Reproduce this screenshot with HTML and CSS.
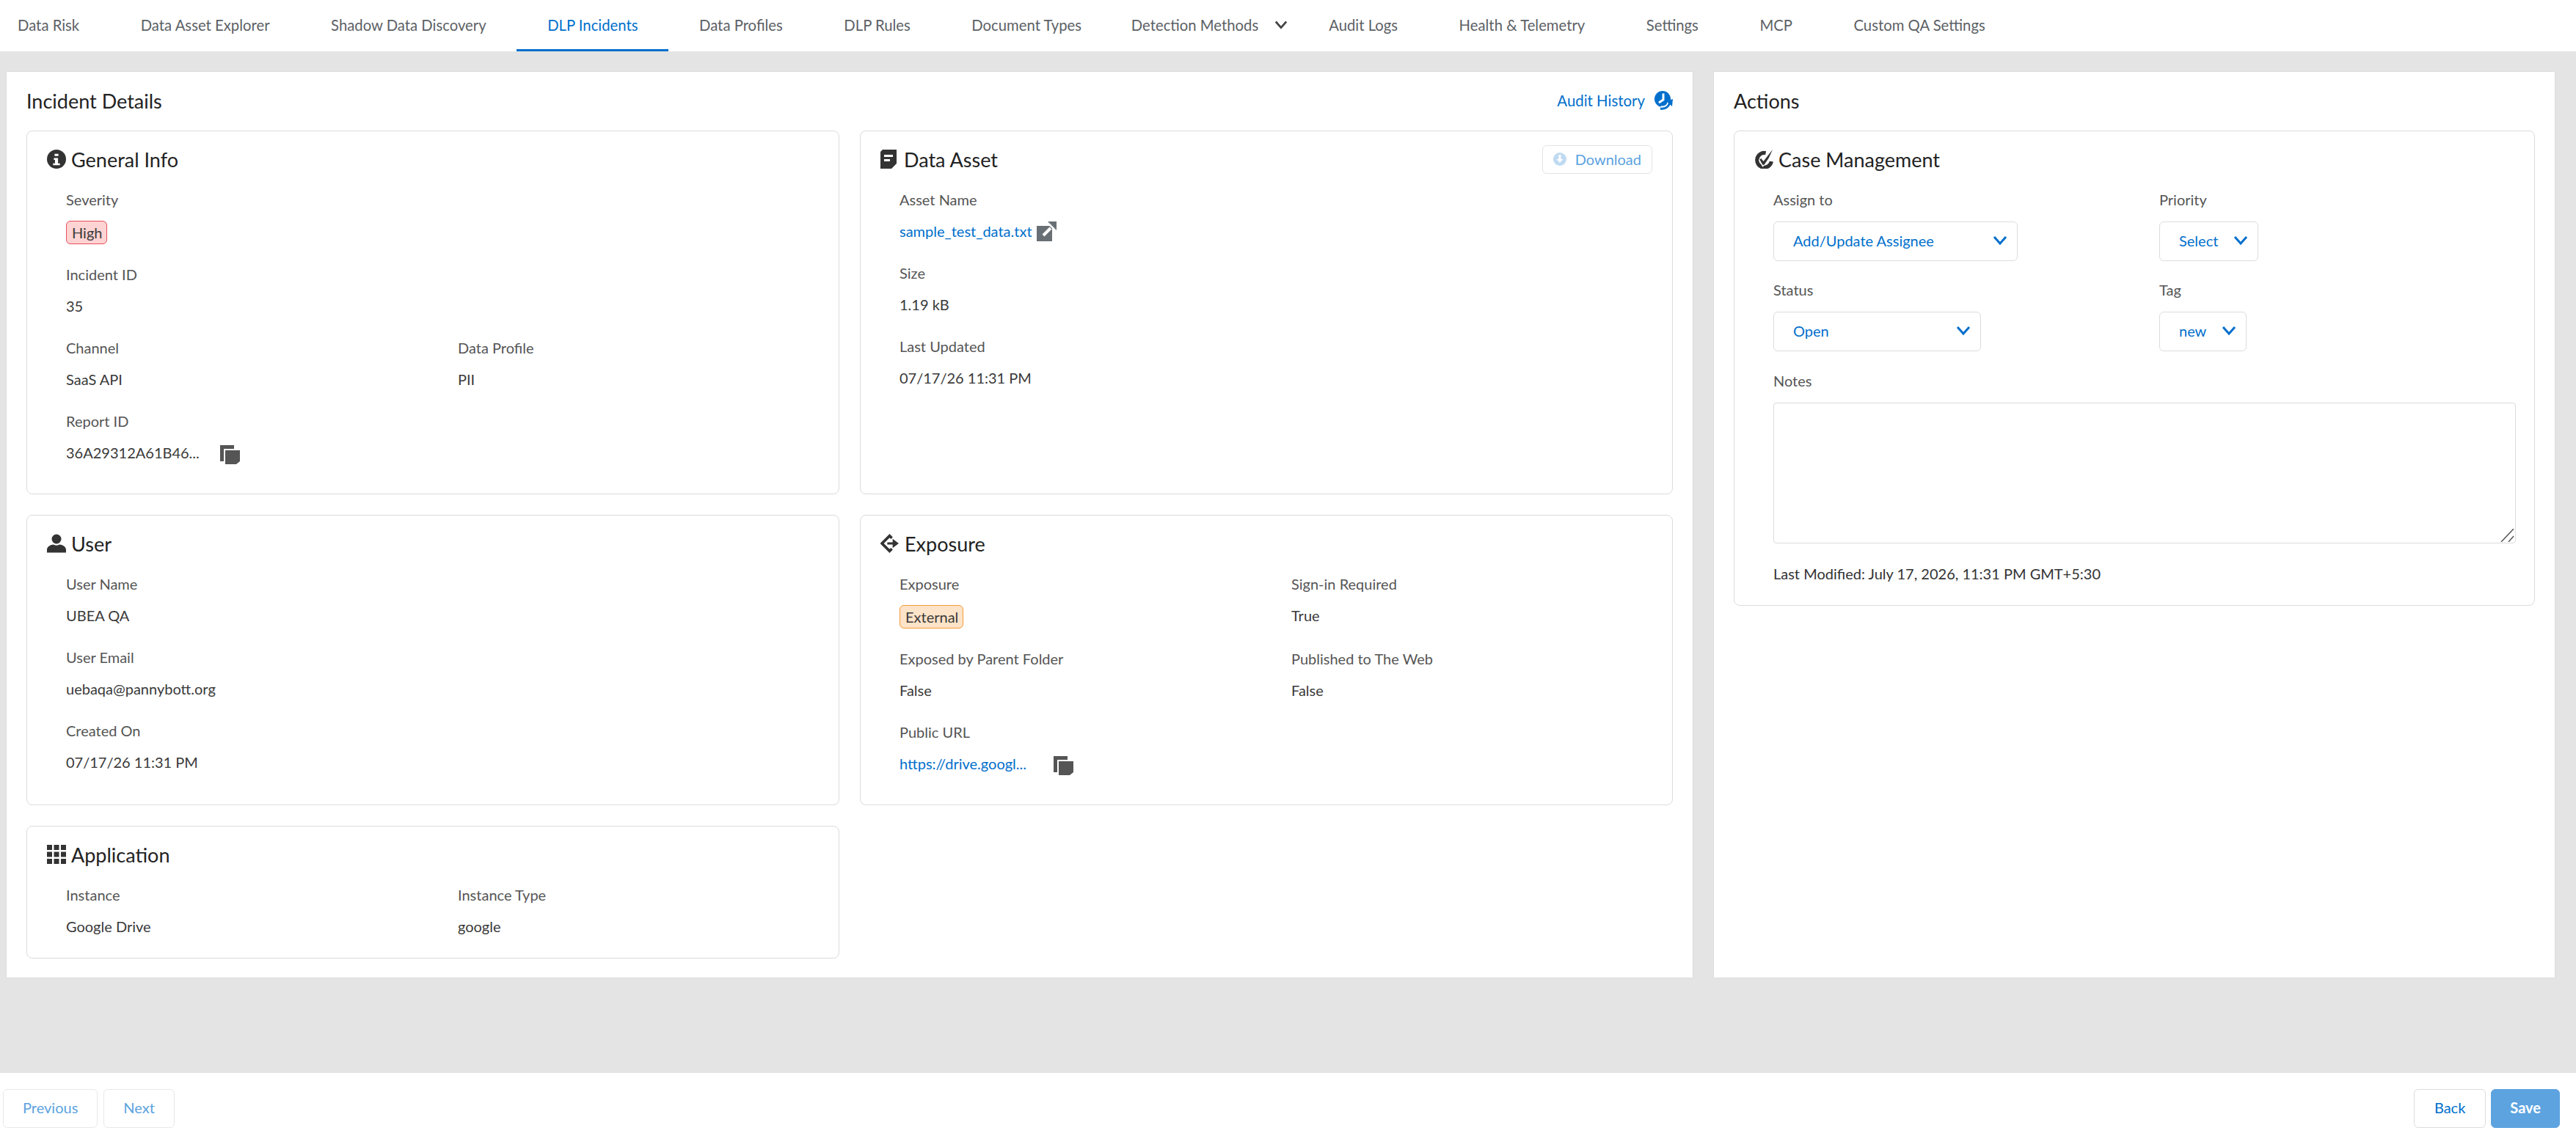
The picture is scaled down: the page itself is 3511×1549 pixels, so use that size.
FILE: index.html
```html
<!DOCTYPE html>
<html>
<head>
  <link rel="stylesheet" href="styles.css">
</head>
<body>
  <svg class="icon-defs" width="0" height="0">
    <symbol id="chevron" viewBox="0 0 20 14">
      <path d="M2 2l8 9 8-9" fill="none" stroke="currentColor" stroke-width="3"/>
    </symbol>
    <symbol id="copy" viewBox="0 0 27 26">
      <path d="M0 0h19v5H5v17H0z"/>
      <path d="M7 7h20v15l-5 4H7z"/>
    </symbol>
  </svg>

  <div class="page">
    <div class="tabs">
      <a class="tab">Data Risk</a>
      <a class="tab">Data Asset Explorer</a>
      <a class="tab">Shadow Data Discovery</a>
      <a class="tab active">DLP Incidents</a>
      <a class="tab">Data Profiles</a>
      <a class="tab">DLP Rules</a>
      <a class="tab">Document Types</a>
      <a class="tab tab-more">Detection Methods <svg class="tab-chevron"><use href="#chevron"/></svg></a>
      <a class="tab">Audit Logs</a>
      <a class="tab">Health &amp; Telemetry</a>
      <a class="tab">Settings</a>
      <a class="tab">MCP</a>
      <a class="tab">Custom QA Settings</a>
    </div>

    <div class="main">
      <div class="panel">
        <div class="panel-header">
          <h2>Incident Details</h2>
          <a class="audit-link">Audit History
            <svg class="audit-icon" viewBox="0 0 25 26">
              <circle cx="11" cy="11" r="11" fill="#006fcc"/>
              <path d="M12 3.500V12l-6 4" fill="none" stroke="#fff" stroke-width="3"/>
              <path d="M8 23c6 2 11-1 13-8" fill="none" stroke="#fff" stroke-width="6"/>
              <path d="M8 24c6 1 11-2 13-8" fill="none" stroke="#006fcc" stroke-width="3"/>
              <path d="M16 14l9-3-1 10z" fill="#006fcc"/>
            </svg>
          </a>
        </div>

        <div class="card-grid">
          <div class="card">
            <div class="card-title">
              <svg class="title-icon" viewBox="0 0 25 25">
                <circle cx="12.500" cy="12.500" r="12.500" fill="#333"/>
                <path d="M10 5.500h5v3h-5zM9 11h5.500v7H17v2.500H8V18h2.500v-4.500H9z" fill="#fff"/>
              </svg>
              General Info
            </div>
            <div class="fields">
              <div class="field full">
                <div class="label">Severity</div>
                <div class="value"><span class="pill pill-high">High</span></div>
              </div>
              <div class="field full">
                <div class="label">Incident ID</div>
                <div class="value">35</div>
              </div>
              <div class="field">
                <div class="label">Channel</div>
                <div class="value">SaaS API</div>
              </div>
              <div class="field">
                <div class="label">Data Profile</div>
                <div class="value">PII</div>
              </div>
              <div class="field full last">
                <div class="label">Report ID</div>
                <div class="value value-copy"><span class="short-text">36A29312A61B46...</span><svg class="copy-icon"><use href="#copy"/></svg></div>
              </div>
            </div>
          </div>

          <div class="card">
            <div class="card-title">
              <svg class="title-icon note-icon" viewBox="0 0 22 26">
                <path d="M3 0h19v19l-7 7H0V3z" fill="#333"/>
                <path d="M5 7h12v3H5zM5 13h8v3H5z" fill="#fff"/>
              </svg>
              Data Asset
              <button class="download"><svg class="download-icon" viewBox="0 0 18 18">
                <circle cx="9" cy="9" r="9" fill="#bfdaf2"/>
                <path d="M7.500 3h3v6h3L9 14 4.500 9h3z" fill="#fff"/>
              </svg> Download</button>
            </div>
            <div class="fields">
              <div class="field full">
                <div class="label">Asset Name</div>
                <div class="value value-asset"><a class="link">sample_test_data.txt</a>
                  <svg class="open-icon" viewBox="0 0 27 27">
                    <path d="M0 6h21v21H0z" fill="#697075"/>
                    <path d="M15 0h12v12z" fill="#697075"/>
                    <path d="M9 19l10-10" stroke="#fff" stroke-width="4"/>
                    <path d="M16 3l8 8" stroke="#fff" stroke-width="2"/>
                  </svg>
                </div>
              </div>
              <div class="field full">
                <div class="label">Size</div>
                <div class="value">1.19 kB</div>
              </div>
              <div class="field full">
                <div class="label">Last Updated</div>
                <div class="value">07/17/26 11:31 PM</div>
              </div>
            </div>
          </div>

          <div class="card">
            <div class="card-title">
              <svg class="title-icon" viewBox="0 0 26 25">
                <circle cx="13" cy="6.500" r="6.500" fill="#333"/>
                <path d="M0 25v-4c0-4 5-7 9-7 2 1.500 6 1.500 8 0 4 0 9 3 9 7v4z" fill="#333"/>
              </svg>
              User
            </div>
            <div class="fields">
              <div class="field full">
                <div class="label">User Name</div>
                <div class="value">UBEA QA</div>
              </div>
              <div class="field full">
                <div class="label">User Email</div>
                <div class="value">uebaqa@pannybott.org</div>
              </div>
              <div class="field full last">
                <div class="label">Created On</div>
                <div class="value">07/17/26 11:31 PM</div>
              </div>
            </div>
          </div>

          <div class="card">
            <div class="card-title">
              <svg class="title-icon" viewBox="0 0 25 24">
                <path d="M15 5l-3-3L2 12l10 10 3-3" fill="none" stroke="#333" stroke-width="3.500"/>
                <path d="M9 10.500h7V6l8 6-8 6v-4.500H9z" fill="#333"/>
              </svg>
              Exposure
            </div>
            <div class="fields">
              <div class="field">
                <div class="label">Exposure</div>
                <div class="value"><span class="pill pill-external">External</span></div>
              </div>
              <div class="field">
                <div class="label">Sign-in Required</div>
                <div class="value">True</div>
              </div>
              <div class="field">
                <div class="label">Exposed by Parent Folder</div>
                <div class="value">False</div>
              </div>
              <div class="field">
                <div class="label">Published to The Web</div>
                <div class="value">False</div>
              </div>
              <div class="field full last">
                <div class="label">Public URL</div>
                <div class="value value-copy"><a class="link short-text">https://drive.googl...</a><svg class="copy-icon"><use href="#copy"/></svg></div>
              </div>
            </div>
          </div>

          <div class="card">
            <div class="card-title">
              <svg class="title-icon" viewBox="0 0 26 26" fill="#333">
                <path d="M0 0h7v7H0zM9.500 0h7v7h-7zM19 0h7v7h-7zM0 9.500h7v7H0zM9.500 9.500h7v7h-7zM19 9.500h7v7h-7zM0 19h7v7H0zM9.500 19h7v7h-7zM19 19h7v7h-7z"/>
              </svg>
              Application
            </div>
            <div class="fields">
              <div class="field last">
                <div class="label">Instance</div>
                <div class="value">Google Drive</div>
              </div>
              <div class="field last">
                <div class="label">Instance Type</div>
                <div class="value">google</div>
              </div>
            </div>
          </div>
        </div>
      </div>

      <div class="panel">
        <div class="panel-header">
          <h2>Actions</h2>
        </div>
        <div class="card card-case">
          <div class="card-title">
            <svg class="title-icon" viewBox="0 0 25 25">
              <path d="M15 4.500a9.500 9.500 0 1 0 7.500 11" fill="none" stroke="#333" stroke-width="5"/>
              <path d="M8.500 12l3 5.500L23.500 1" fill="none" stroke="#fff" stroke-width="6"/>
              <path d="M9 11.500l3 4L24 0l-5 11-6 9h-2l-4-7z" fill="#333"/>
            </svg>
            Case Management
          </div>
          <div class="form-grid">
            <div class="form-row">
              <div class="label">Assign to</div>
              <div class="select select-assign">Add/Update Assignee <svg class="select-chevron"><use href="#chevron"/></svg></div>
            </div>
            <div class="form-row">
              <div class="label">Priority</div>
              <div class="select">Select <svg class="select-chevron"><use href="#chevron"/></svg></div>
            </div>
            <div class="form-row">
              <div class="label">Status</div>
              <div class="select select-status">Open <svg class="select-chevron"><use href="#chevron"/></svg></div>
            </div>
            <div class="form-row">
              <div class="label">Tag</div>
              <div class="select">new <svg class="select-chevron"><use href="#chevron"/></svg></div>
            </div>
          </div>
          <div class="label">Notes</div>
          <div class="notes-wrap">
            <textarea class="notes"></textarea>
            <svg class="resizer" viewBox="0 0 19 18">
              <path d="M1 18L18 0M11 18l7-8" fill="none" stroke="#555" stroke-width="1.500"/>
            </svg>
          </div>
          <div class="modified">Last Modified: July 17, 2026, 11:31 PM GMT+5:30</div>
        </div>
      </div>
    </div>

    <div class="footer">
      <div class="footer-group">
        <button class="btn btn-faded">Previous</button>
        <button class="btn btn-faded">Next</button>
      </div>
      <div class="footer-group footer-right">
        <button class="btn btn-back">Back</button>
        <button class="btn btn-save">Save</button>
      </div>
    </div>
  </div>
</body>
</html>
```

FILE: styles.css
```css
* {
  box-sizing: border-box;
  margin: 0;
  padding: 0;
}

body {
  font-family: Lato, "Open Sans", sans-serif;
  font-size: 20px;
  color: #333;
  background: #e4e4e4;
}

.icon-defs {
  position: absolute;
}

.page {
  display: flex;
  flex-direction: column;
  height: 1549px;
}

/* top tabs */
.tabs {
  display: flex;
  height: 70px;
  background: white;
  font-size: 20.3px;
}

.tab {
  display: flex;
  align-items: center;
  padding: 0 41.75px;
  color: #5c6166;
  border-bottom: 3px solid transparent;
  white-space: pre;
}

.tab:first-child {
  padding-left: 24px;
}

.tab.active {
  color: #006fcc;
  border-bottom-color: #006fcc;
}

.tab-more {
  padding: 0 14px 0 26px;
}

.tab-chevron {
  width: 18px;
  height: 14px;
  margin-left: 17px;
  color: #444;
}

/* main area */
.main {
  flex: 1;
  display: grid;
  grid-template-columns: 2300px 1148px;
  gap: 27px;
  align-items: start;
  padding: 27px 28px 0 8px;
}

.panel {
  height: 1237px;
  background: white;
  border: 1px solid #dcdcdc;
  padding: 0 27px;
}

.panel-header {
  display: flex;
  justify-content: space-between;
  align-items: center;
  height: 80px;
  padding-bottom: 2px;
}

.panel-header h2 {
  font-size: 27px;
  font-weight: 400;
  color: #222;
}

.audit-link {
  display: flex;
  align-items: center;
  gap: 13px;
  font-size: 20.4px;
  color: #006fcc;
}

.audit-icon {
  width: 25px;
  height: 26px;
}

.card-grid {
  display: grid;
  grid-template-columns: 1fr 1fr;
  gap: 28px;
}

.card {
  background: white;
  border: 1px solid #dcdcdc;
  border-radius: 8px;
  padding: 22px 27px 0;
}

.card-title {
  display: flex;
  align-items: center;
  gap: 7px;
  height: 32px;
  margin-bottom: 27px;
  font-size: 27px;
  color: #222;
}

.title-icon {
  width: 26px;
  height: 26px;
  flex: none;
}

.note-icon {
  width: 22px;
  margin-right: 3px;
}

.download {
  display: flex;
  align-items: center;
  gap: 12px;
  height: 39px;
  margin-left: auto;
  padding: 0 14px;
  background: white;
  border: 1px solid #e4e4e4;
  border-radius: 6px;
  font: inherit;
  font-size: 20px;
  color: #5ca3e0;
}

.download-icon {
  width: 18px;
  height: 18px;
}

.fields {
  display: grid;
  grid-template-columns: 534px 1fr;
  padding-left: 26px;
}

.field {
  margin-bottom: 33px;
}

.field.full {
  grid-column: 1 / 3;
}

.field.last {
  margin-bottom: 31px;
}

.label {
  line-height: 24px;
  color: #555;
}

.field .label {
  margin-bottom: 19px;
}

.value {
  line-height: 24px;
  color: #3a3a3a;
}

.value-copy {
  display: flex;
  align-items: flex-start;
  height: 37px;
}

.short-text {
  width: 210px;
}

.value-asset {
  display: flex;
  align-items: flex-start;
  gap: 6px;
  height: 24px;
}

.link {
  color: #006fcc;
}

.copy-icon {
  width: 27px;
  height: 26px;
  margin-top: 2px;
  fill: #555;
}

.open-icon {
  width: 27px;
  height: 27px;
  margin-top: -1px;
}

.pill {
  display: inline-block;
  height: 32px;
  margin: -2px 0 -4px;
  padding: 0 6px 0 7px;
  line-height: 30px;
  border: 1px solid;
  border-radius: 6px;
  vertical-align: top;
}

.pill-high {
  background: #fdd3d3;
  border-color: #e8515a;
}

.pill-external {
  background: #fde3c8;
  border-color: #f59a3a;
}

/* case management */
.card-case {
  height: 648px;
}

.form-grid {
  display: grid;
  grid-template-columns: 526px 1fr;
  gap: 27px 0;
  padding-left: 26px;
  margin-bottom: 28px;
}

.form-row .label {
  margin-bottom: 18px;
}

.select {
  display: inline-flex;
  align-items: center;
  justify-content: space-between;
  gap: 21px;
  height: 54px;
  padding: 0 13px 2px 26px;
  background: white;
  border: 1px solid #dcdcdc;
  border-radius: 6px;
  color: #006fcc;
}

.select-assign {
  width: 333px;
}

.select-status {
  width: 283px;
}

.select-chevron {
  width: 20px;
  height: 14px;
}

.card-case > .label,
.notes-wrap,
.modified {
  margin-left: 26px;
}

.notes-wrap {
  position: relative;
  width: 1012px;
  height: 192px;
  margin-top: 18px;
}

.notes {
  display: block;
  width: 100%;
  height: 100%;
  background: white;
  border: 1px solid #dcdcdc;
  border-radius: 4px;
  resize: none;
}

.resizer {
  position: absolute;
  right: 2px;
  bottom: 2px;
  width: 19px;
  height: 18px;
}

.modified {
  margin-top: 29px;
  line-height: 24px;
  color: #333;
}

/* bottom bar */
.footer {
  display: flex;
  justify-content: space-between;
  height: 86px;
  padding: 22px 22px 0 4px;
  background: white;
}

.footer-group {
  display: flex;
  gap: 8px;
}

.footer-right {
  gap: 7px;
}

.btn {
  height: 53px;
  padding: 0 26px 3px;
  background: white;
  border: 1px solid #dcdcdc;
  border-radius: 6px;
  font: inherit;
  color: #006fcc;
}

.btn-faded {
  border-color: #e8e8e8;
  color: #5ca3e0;
}

.btn-back {
  padding: 0 27px 3px;
}

.btn-save {
  padding: 0 25px 3px;
  background: #5ca3e0;
  border-color: #5ca3e0;
  color: white;
  font-weight: 700;
}
```
